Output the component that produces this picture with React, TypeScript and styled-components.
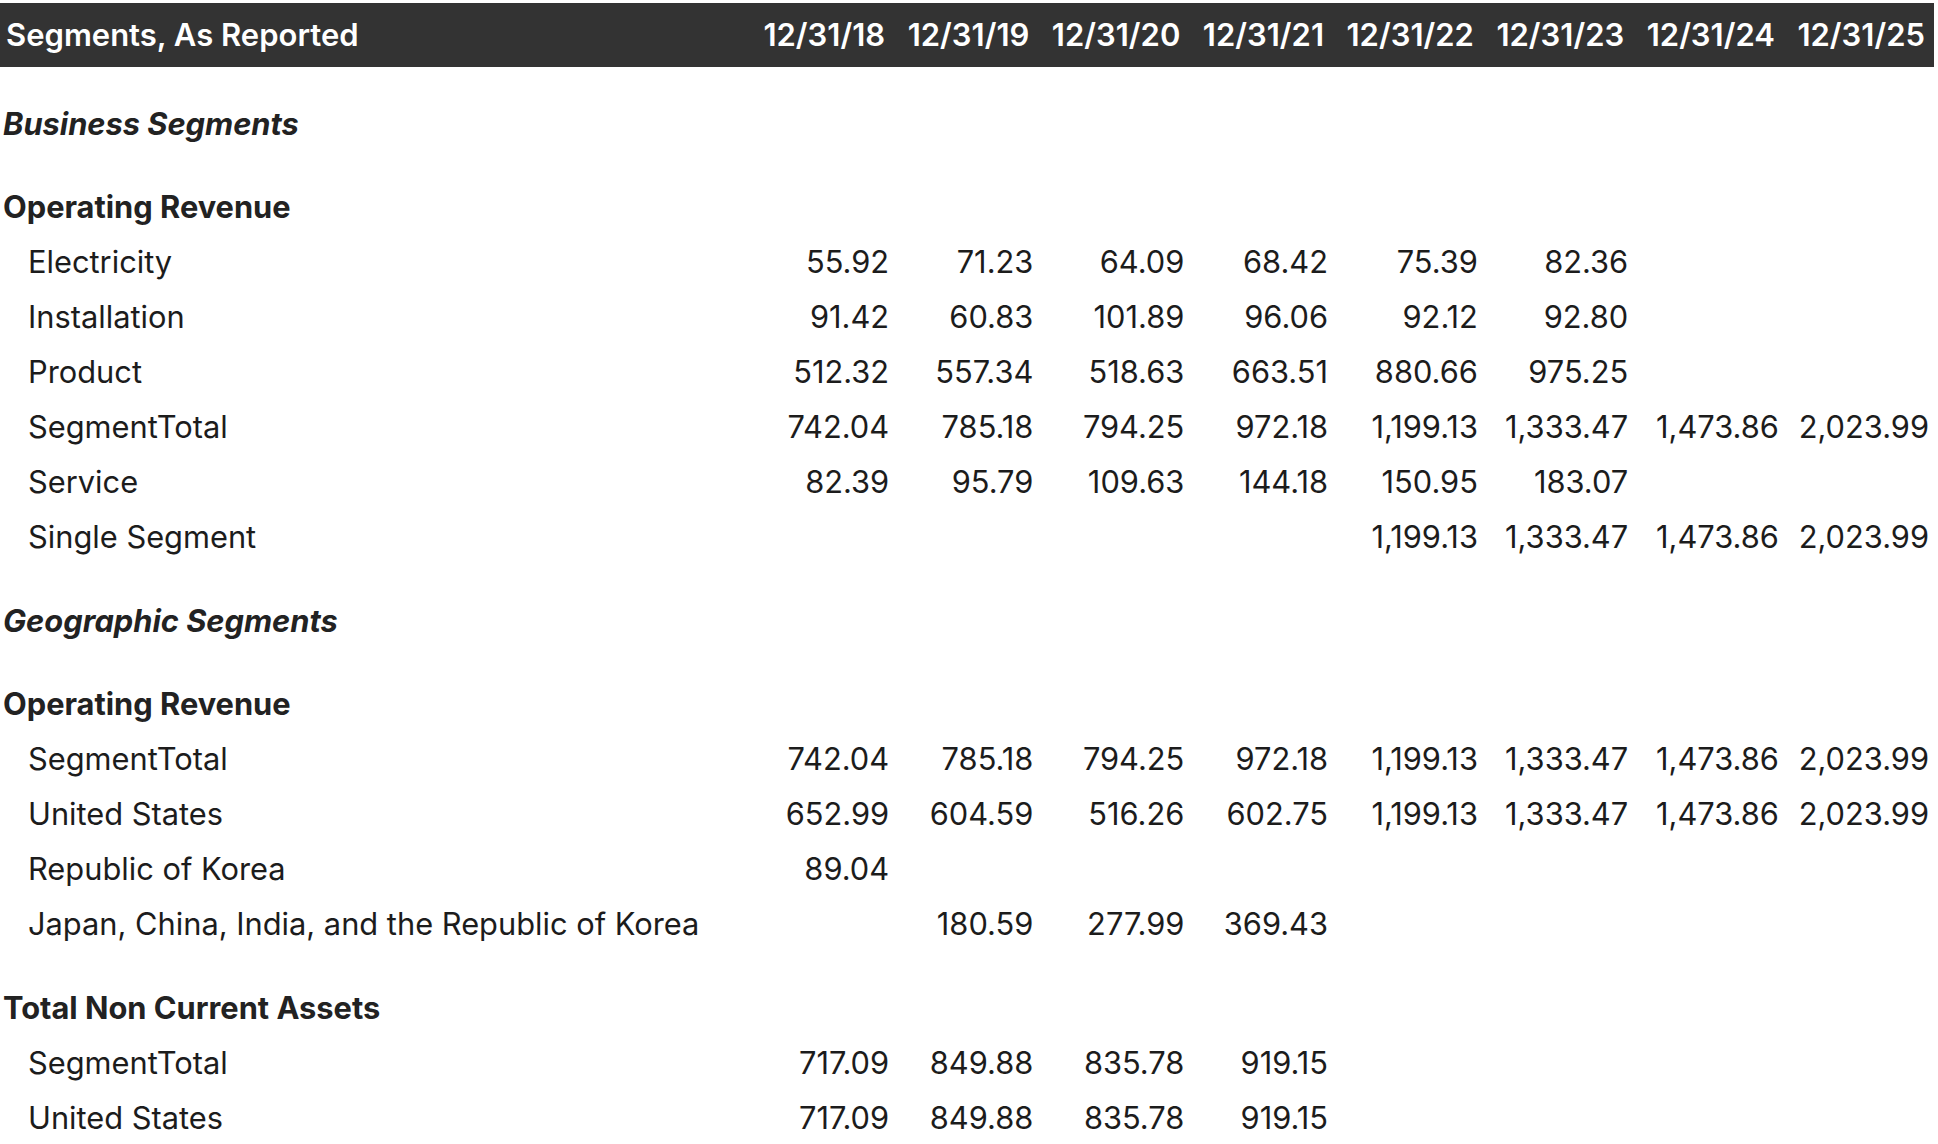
import React from 'react';
import styled, { createGlobalStyle } from 'styled-components';

const GlobalStyle = createGlobalStyle`
  body {
    margin: 0;
    background: #ffffff;
    font-family: Inter, 'Noto Sans', sans-serif;
    color: #1c1c1c;
  }
`;

const Page = styled.div`
  padding: 3px 4px 0 0;
`;

const Table = styled.table`
  width: 100%;
  border-collapse: collapse;
  border-spacing: 0;
  font-size: 30.8px;
`;

const HeadRow = styled.tr`
  background: #333333;
  color: #ffffff;
`;

const HeadCell = styled.th<{ $label?: boolean }>`
  line-height: 64px;
  padding: ${p => (p.$label ? '0 0 0 6px' : '0 9px 0 13.5px')};
  width: ${p => (p.$label ? 'auto' : '1%')};
  text-align: ${p => (p.$label ? 'left' : 'right')};
  font-size: 31px;
  font-weight: 600;
  white-space: nowrap;
`;

const SectionCell = styled.td`
  padding: 28.5px 0 0 3px;
  line-height: 55px;
  font-weight: 700;
  font-style: italic;
  color: #222222;
`;

const GroupCell = styled.td`
  padding: 28.5px 0 0 3px;
  line-height: 55px;
  font-weight: 700;
  color: #222222;
`;

const LabelCell = styled.td`
  padding: 0 0 0 28px;
  line-height: 55px;
  white-space: nowrap;
`;

const ValueCell = styled.td`
  padding: 0 5px 0 14px;
  width: 1%;
  line-height: 55px;
  text-align: right;
  white-space: nowrap;
`;

const dates = ['12/31/18', '12/31/19', '12/31/20', '12/31/21', '12/31/22', '12/31/23', '12/31/24', '12/31/25'];

type Row =
  | { kind: 'section'; label: string }
  | { kind: 'group'; label: string }
  | { kind: 'item'; label: string; values: string[] };

const rows: Row[] = [
  { kind: 'section', label: 'Business Segments' },
  { kind: 'group', label: 'Operating Revenue' },
  { kind: 'item', label: 'Electricity', values: ['55.92', '71.23', '64.09', '68.42', '75.39', '82.36'] },
  { kind: 'item', label: 'Installation', values: ['91.42', '60.83', '101.89', '96.06', '92.12', '92.80'] },
  { kind: 'item', label: 'Product', values: ['512.32', '557.34', '518.63', '663.51', '880.66', '975.25'] },
  { kind: 'item', label: 'SegmentTotal', values: ['742.04', '785.18', '794.25', '972.18', '1,199.13', '1,333.47', '1,473.86', '2,023.99'] },
  { kind: 'item', label: 'Service', values: ['82.39', '95.79', '109.63', '144.18', '150.95', '183.07'] },
  { kind: 'item', label: 'Single Segment', values: ['', '', '', '', '1,199.13', '1,333.47', '1,473.86', '2,023.99'] },
  { kind: 'section', label: 'Geographic Segments' },
  { kind: 'group', label: 'Operating Revenue' },
  { kind: 'item', label: 'SegmentTotal', values: ['742.04', '785.18', '794.25', '972.18', '1,199.13', '1,333.47', '1,473.86', '2,023.99'] },
  { kind: 'item', label: 'United States', values: ['652.99', '604.59', '516.26', '602.75', '1,199.13', '1,333.47', '1,473.86', '2,023.99'] },
  { kind: 'item', label: 'Republic of Korea', values: ['89.04'] },
  { kind: 'item', label: 'Japan, China, India, and the Republic of Korea', values: ['', '180.59', '277.99', '369.43'] },
  { kind: 'group', label: 'Total Non Current Assets' },
  { kind: 'item', label: 'SegmentTotal', values: ['717.09', '849.88', '835.78', '919.15'] },
  { kind: 'item', label: 'United States', values: ['717.09', '849.88', '835.78', '919.15'] },
];

export default function App() {
  return (
    <Page>
      <GlobalStyle />
      <Table>
        <thead>
          <HeadRow>
            <HeadCell $label>Segments, As Reported</HeadCell>
            {dates.map(d => (
              <HeadCell key={d}>{d}</HeadCell>
            ))}
          </HeadRow>
        </thead>
        <tbody>
          {rows.map((row, i) => {
            if (row.kind === 'section') {
              return (
                <tr key={i}>
                  <SectionCell colSpan={9}>{row.label}</SectionCell>
                </tr>
              );
            }
            if (row.kind === 'group') {
              return (
                <tr key={i}>
                  <GroupCell colSpan={9}>{row.label}</GroupCell>
                </tr>
              );
            }
            return (
              <tr key={i}>
                <LabelCell>{row.label}</LabelCell>
                {dates.map((d, j) => (
                  <ValueCell key={d}>{row.values[j] ?? ''}</ValueCell>
                ))}
              </tr>
            );
          })}
        </tbody>
      </Table>
    </Page>
  );
}
